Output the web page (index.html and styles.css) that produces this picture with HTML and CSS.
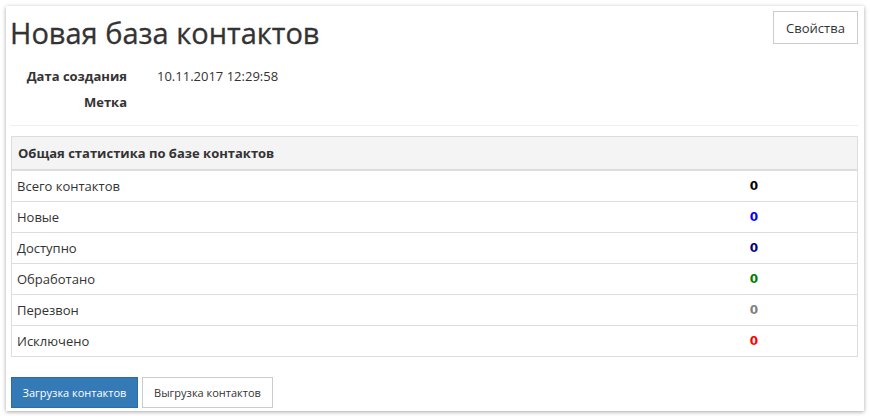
FILE: index.html
```html
<!DOCTYPE html>
<html lang="ru">
<head>
<meta charset="utf-8">
<link rel="stylesheet" href="styles.css">
</head>
<body>
<div class="card">
  <div class="head">
    <h1 class="title">Новая база контактов</h1>
    <button class="btn btn-default btn-props">Свойства</button>
  </div>
  <div class="info">
    <div class="info-row"><span class="info-label">Дата создания</span><span class="info-value">10.11.2017 12:29:58</span></div>
    <div class="info-row"><span class="info-label">Метка</span><span class="info-value"></span></div>
  </div>
  <hr class="sep">
  <table class="stats">
    <thead>
      <tr><th colspan="2">Общая статистика по базе контактов</th></tr>
    </thead>
    <tbody>
      <tr><td>Всего контактов</td><td class="num c-black">0</td></tr>
      <tr><td>Новые</td><td class="num c-blue">0</td></tr>
      <tr><td>Доступно</td><td class="num c-navy">0</td></tr>
      <tr><td>Обработано</td><td class="num c-green">0</td></tr>
      <tr><td>Перезвон</td><td class="num c-gray">0</td></tr>
      <tr><td>Исключено</td><td class="num c-red">0</td></tr>
    </tbody>
  </table>
  <div class="actions">
    <button class="btn btn-primary">Загрузка контактов</button>
    <button class="btn btn-default btn-export">Выгрузка контактов</button>
  </div>
</div>
</body>
</html>
```
FILE: styles.css
```css
html, body {
  margin: 0;
  padding: 0;
  background: #fff;
}
body {
  font-family: "Open Sans", "Liberation Sans", sans-serif;
  font-size: 13px;
  color: #333;
}
.card {
  margin: 6px;
  width: 858px;
  height: 405px;
  box-sizing: border-box;
  padding: 5px 6px 0 5px;
  background: #fff;
  box-shadow: 0 1px 4px rgba(0,0,0,0.35);
}
.head {
  display: flex;
  justify-content: space-between;
  align-items: flex-start;
}
.title {
  margin: 4px 0 0 -1px;
  font-size: 29px;
  font-weight: 400;
  line-height: 36px;
  color: #333;
  -webkit-text-stroke: 0.3px #333;
}
.btn {
  font-family: "Open Sans", "Liberation Sans", sans-serif;
  font-size: 11px;
  height: 31px;
  padding: 0 10px;
  border: 1px solid #ccc;
  border-radius: 0;
  background: #fff;
  color: #333;
  cursor: pointer;
}
.btn-props {
  height: 33px;
  width: 85px;
  font-size: 13px;
}
.btn-primary {
  width: 127px;
  background: #337ab7;
  border-color: #2e6da4;
  color: #fff;
}
.btn-export {
  width: 131px;
}
.info {
  margin-top: 15px;
  display: flex;
  flex-direction: column;
  gap: 6px;
}
.info-row {
  display: flex;
  line-height: 20px;
}
.info-label {
  width: 116px;
  text-align: right;
  font-weight: 700;
}
.info-value {
  margin-left: 30px;
}
.sep {
  margin: 13px 0 0 0;
  border: 0;
  border-top: 1px solid #eee;
}
.stats {
  margin-top: 10px;
  width: 100%;
  border-collapse: collapse;
  border: 1px solid #ddd;
}
.stats th {
  text-align: left;
  font-weight: 700;
  background: #f4f4f4;
  height: 32px;
  padding: 0 6px;
  border-bottom: 2px solid #ddd;
}
.stats td {
  height: 30px;
  padding: 0 5px;
  border-top: 1px solid #ddd;
}
.stats td.num {
  width: 196px;
  text-align: center;
  font-family: "DejaVu Sans", sans-serif;
  font-weight: 700;
  font-size: 12px;
}
.c-black { color: #000; }
.c-blue { color: #0000ff; }
.c-navy { color: #000080; }
.c-green { color: #008000; }
.c-gray { color: #808080; }
.c-red { color: #ff0000; }
.actions {
  margin-top: 20px;
  display: flex;
  gap: 4px;
}
```
